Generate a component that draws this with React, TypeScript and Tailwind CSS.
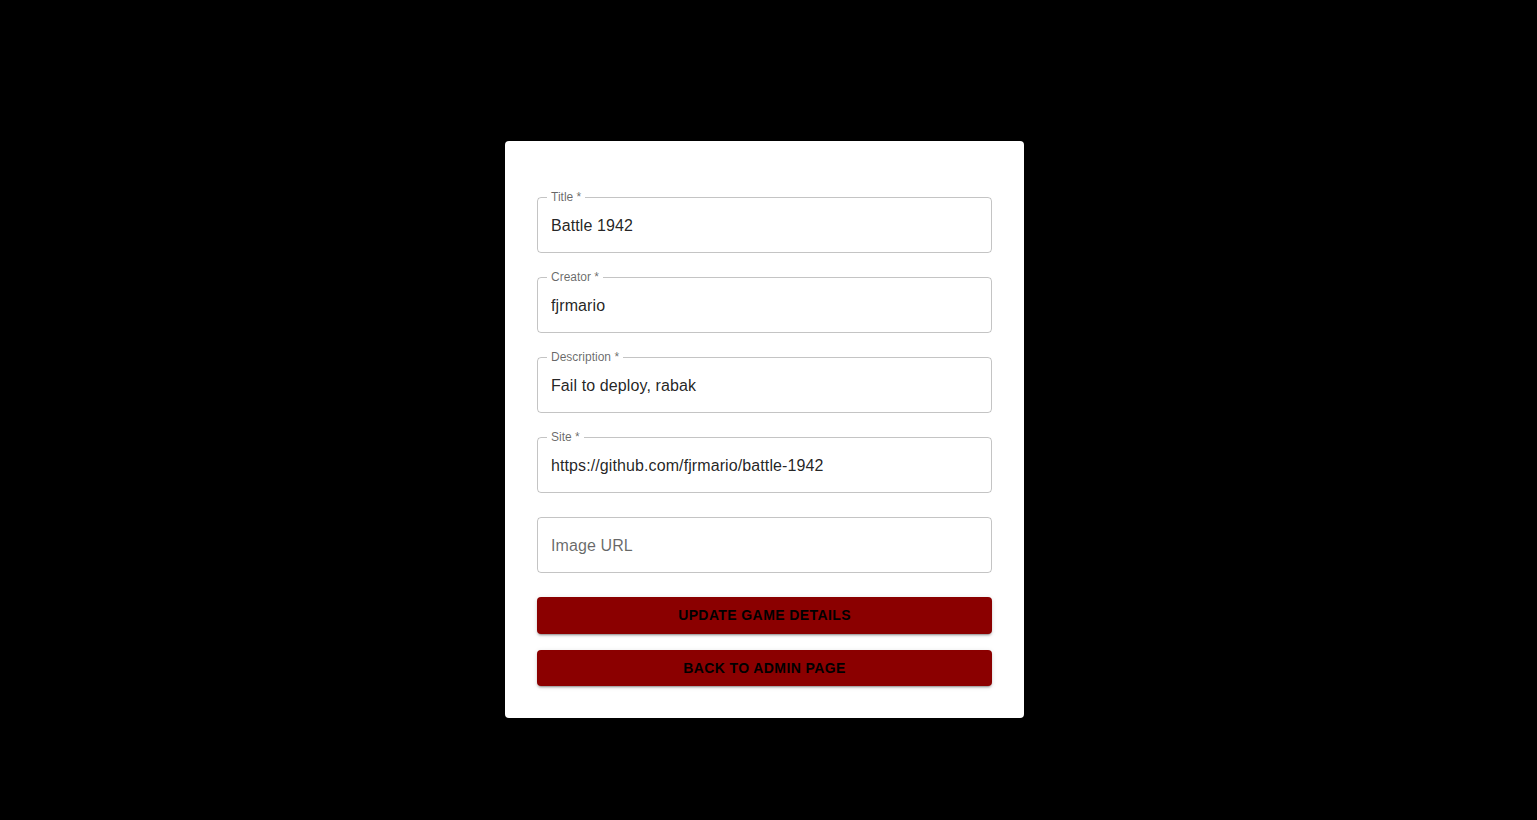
import React from "react";

const fields = [
  { label: "Title", value: "Battle 1942" },
  { label: "Creator", value: "fjrmario" },
  { label: "Description", value: "Fail to deploy, rabak" },
  { label: "Site", value: "https://github.com/fjrmario/battle-1942" },
];

function Field({ label, value }: { label: string; value: string }) {
  return (
    <div className="relative h-[56px] w-full rounded-[4px] border border-[rgba(0,0,0,0.23)]">
      <label className="absolute left-[9px] top-[-8px] bg-white px-[4px] text-[12px] leading-[14px] text-[rgba(0,0,0,0.6)]">
        {label} <span className="text-[rgba(0,0,0,0.6)]">*</span>
      </label>
      <input
        readOnly
        value={value}
        className="h-full w-full bg-transparent px-[13px] pt-[2px] text-[16px] tracking-[0.1px] text-[rgba(0,0,0,0.87)] outline-none"
      />
    </div>
  );
}

const btn =
  "w-full rounded-[4px] bg-[#8b0000] text-[14px] font-bold uppercase tracking-[0.4px] text-black shadow-[0_3px_1px_-2px_rgba(0,0,0,0.2),0_2px_2px_0_rgba(0,0,0,0.14),0_1px_5px_0_rgba(0,0,0,0.12)]";

export default function App() {
  return (
    <div className="flex min-h-screen items-start justify-center bg-black pr-[8px] pt-[141px] font-['Liberation_Sans',Arial,sans-serif]">
      <div className="w-[519px] rounded-[4px] bg-white px-[32px] pb-[32px] pt-[56px]">
        <form className="flex flex-col gap-[24px]">
          {fields.map((f) => (
            <Field key={f.label} label={f.label} value={f.value} />
          ))}
          <div className="h-[56px] w-full rounded-[4px] border border-[rgba(0,0,0,0.23)]">
            <input
              readOnly
              placeholder="Image URL"
              className="h-full w-full bg-transparent px-[13px] pt-[2px] text-[16px] tracking-[0.1px] text-[rgba(0,0,0,0.87)] outline-none placeholder:text-[rgba(0,0,0,0.6)]"
            />
          </div>
        </form>
        <div className="mt-[24px] flex flex-col gap-[16px]">
          <button className={`h-[37px] ${btn}`}>Update Game Details</button>
          <button className={`h-[36px] ${btn}`}>Back to Admin Page</button>
        </div>
      </div>
    </div>
  );
}
